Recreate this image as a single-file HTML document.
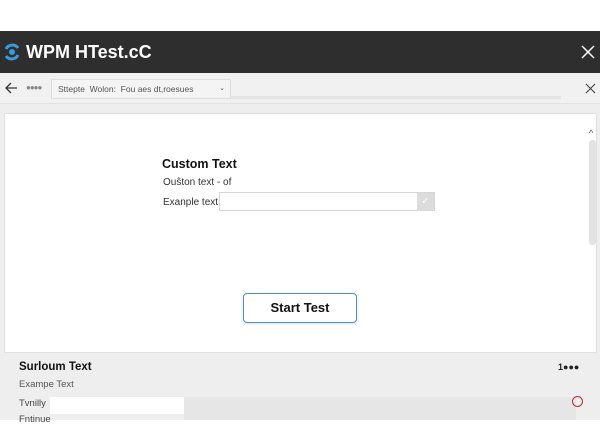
<!DOCTYPE html>
<html><head><style>
*{margin:0;padding:0;box-sizing:border-box}
body{width:600px;height:420px;background:#fff;font-family:"Liberation Sans",sans-serif;position:relative;overflow:hidden}
.a{position:absolute}
</style></head><body>
<div class="a" style="left:0;top:31px;width:600px;height:42px;background:#2e2e2e"></div>
<svg class="a" style="left:3px;top:43px" width="18" height="18" viewBox="0 0 18 18"><path d="M3 6 A7 7 0 0 1 15 5" stroke="#3a9ad9" stroke-width="3" fill="none"/><path d="M15 12 A7 7 0 0 1 3 13" stroke="#3a9ad9" stroke-width="3" fill="none"/><circle cx="9" cy="9" r="3" fill="#3a9ad9"/></svg>
<div class="a" style="left:26px;top:42px;color:#fff;font-size:18px;font-weight:bold">WPM HTest.cC</div>
<svg class="a" style="left:581px;top:45px" width="14" height="14"><path d="M1 1L13 13M13 1L1 13" stroke="#fff" stroke-width="1.5"/></svg>
<div class="a" style="left:0;top:73px;width:600px;height:31px;background:#f1f1f1;border-bottom:1px solid #e2e2e2"></div>
<svg class="a" style="left:5px;top:82px" width="13" height="12"><path d="M12 6H1M6 1L1 6L6 11" stroke="#333" stroke-width="1.3" fill="none"/></svg>
<div class="a" style="left:26px;top:83px;font-size:8px;color:#888;letter-spacing:-1px">●●●●</div>
<div class="a" style="left:51px;top:79px;width:180px;height:20px;background:#f4f4f4;border:1px solid #ddd;font-size:8.5px;color:#555;padding:4px 6px;white-space:nowrap">Sttepte &nbsp;Wolon: &nbsp;Fou aes dt,roesues <span style="position:absolute;right:5px;font-size:7px">⌄</span></div>
<div class="a" style="left:231px;top:96px;width:330px;height:3px;background:#e6e6e6"></div>
<svg class="a" style="left:585px;top:83px" width="11" height="11"><path d="M1 1L10 10M10 1L1 10" stroke="#444" stroke-width="1.1"/></svg>
<div class="a" style="left:0;top:104px;width:600px;height:316px;background:#eeeeee"></div>
<div class="a" style="left:4px;top:113px;width:593px;height:240px;background:#fff;border:1px solid #e0e0e0"></div>
<div class="a" style="left:589px;top:128px;font-size:9px;color:#555">^</div>
<div class="a" style="left:589px;top:140px;width:7px;height:105px;background:#e2e2e2;border-radius:3px"></div>
<div class="a" style="left:162px;top:157px;font-size:12.5px;font-weight:bold;color:#111">Custom Text</div>
<div class="a" style="left:163px;top:177px;font-size:10px;color:#333">Ouŝton text ‑ of</div>
<div class="a" style="left:163px;top:197px;font-size:10px;color:#333">Exanple text</div>
<div class="a" style="left:219px;top:192px;width:216px;height:19px;background:#fff;border:1px solid #d6d6d6"></div>
<div class="a" style="left:417px;top:193px;width:17px;height:17px;background:#dcdcdc;color:#fff;font-size:10px;text-align:center;line-height:17px">✓</div>
<div class="a" style="left:243px;top:293px;width:114px;height:30px;border:1.5px solid #4a90d6;border-radius:4px;background:#fff;box-shadow:0 1px 3px rgba(0,0,0,.12);font-size:13px;font-weight:bold;color:#111;text-align:center;line-height:27px">Start Test</div>
<div class="a" style="left:19px;top:361px;font-size:11.5px;font-weight:bold;color:#111">Surloum Text</div>
<div class="a" style="left:558px;top:362px;font-size:9px;font-weight:bold;color:#222">1●●●</div>
<div class="a" style="left:19px;top:379px;font-size:9.5px;color:#555">Exampe Text</div>
<div class="a" style="left:19px;top:398px;font-size:9.5px;color:#444">Tvnilly</div>
<div class="a" style="left:50px;top:397px;width:134px;height:17px;background:#fff"></div>
<div class="a" style="left:184px;top:397px;width:392px;height:23px;background:#e6e6e6"></div>
<div class="a" style="left:572px;top:396px;width:11px;height:11px;border:1.5px solid #c0282d;border-radius:50%"></div>
<div class="a" style="left:19px;top:414px;font-size:9.5px;color:#444">Fntinue</div>
</body></html>
